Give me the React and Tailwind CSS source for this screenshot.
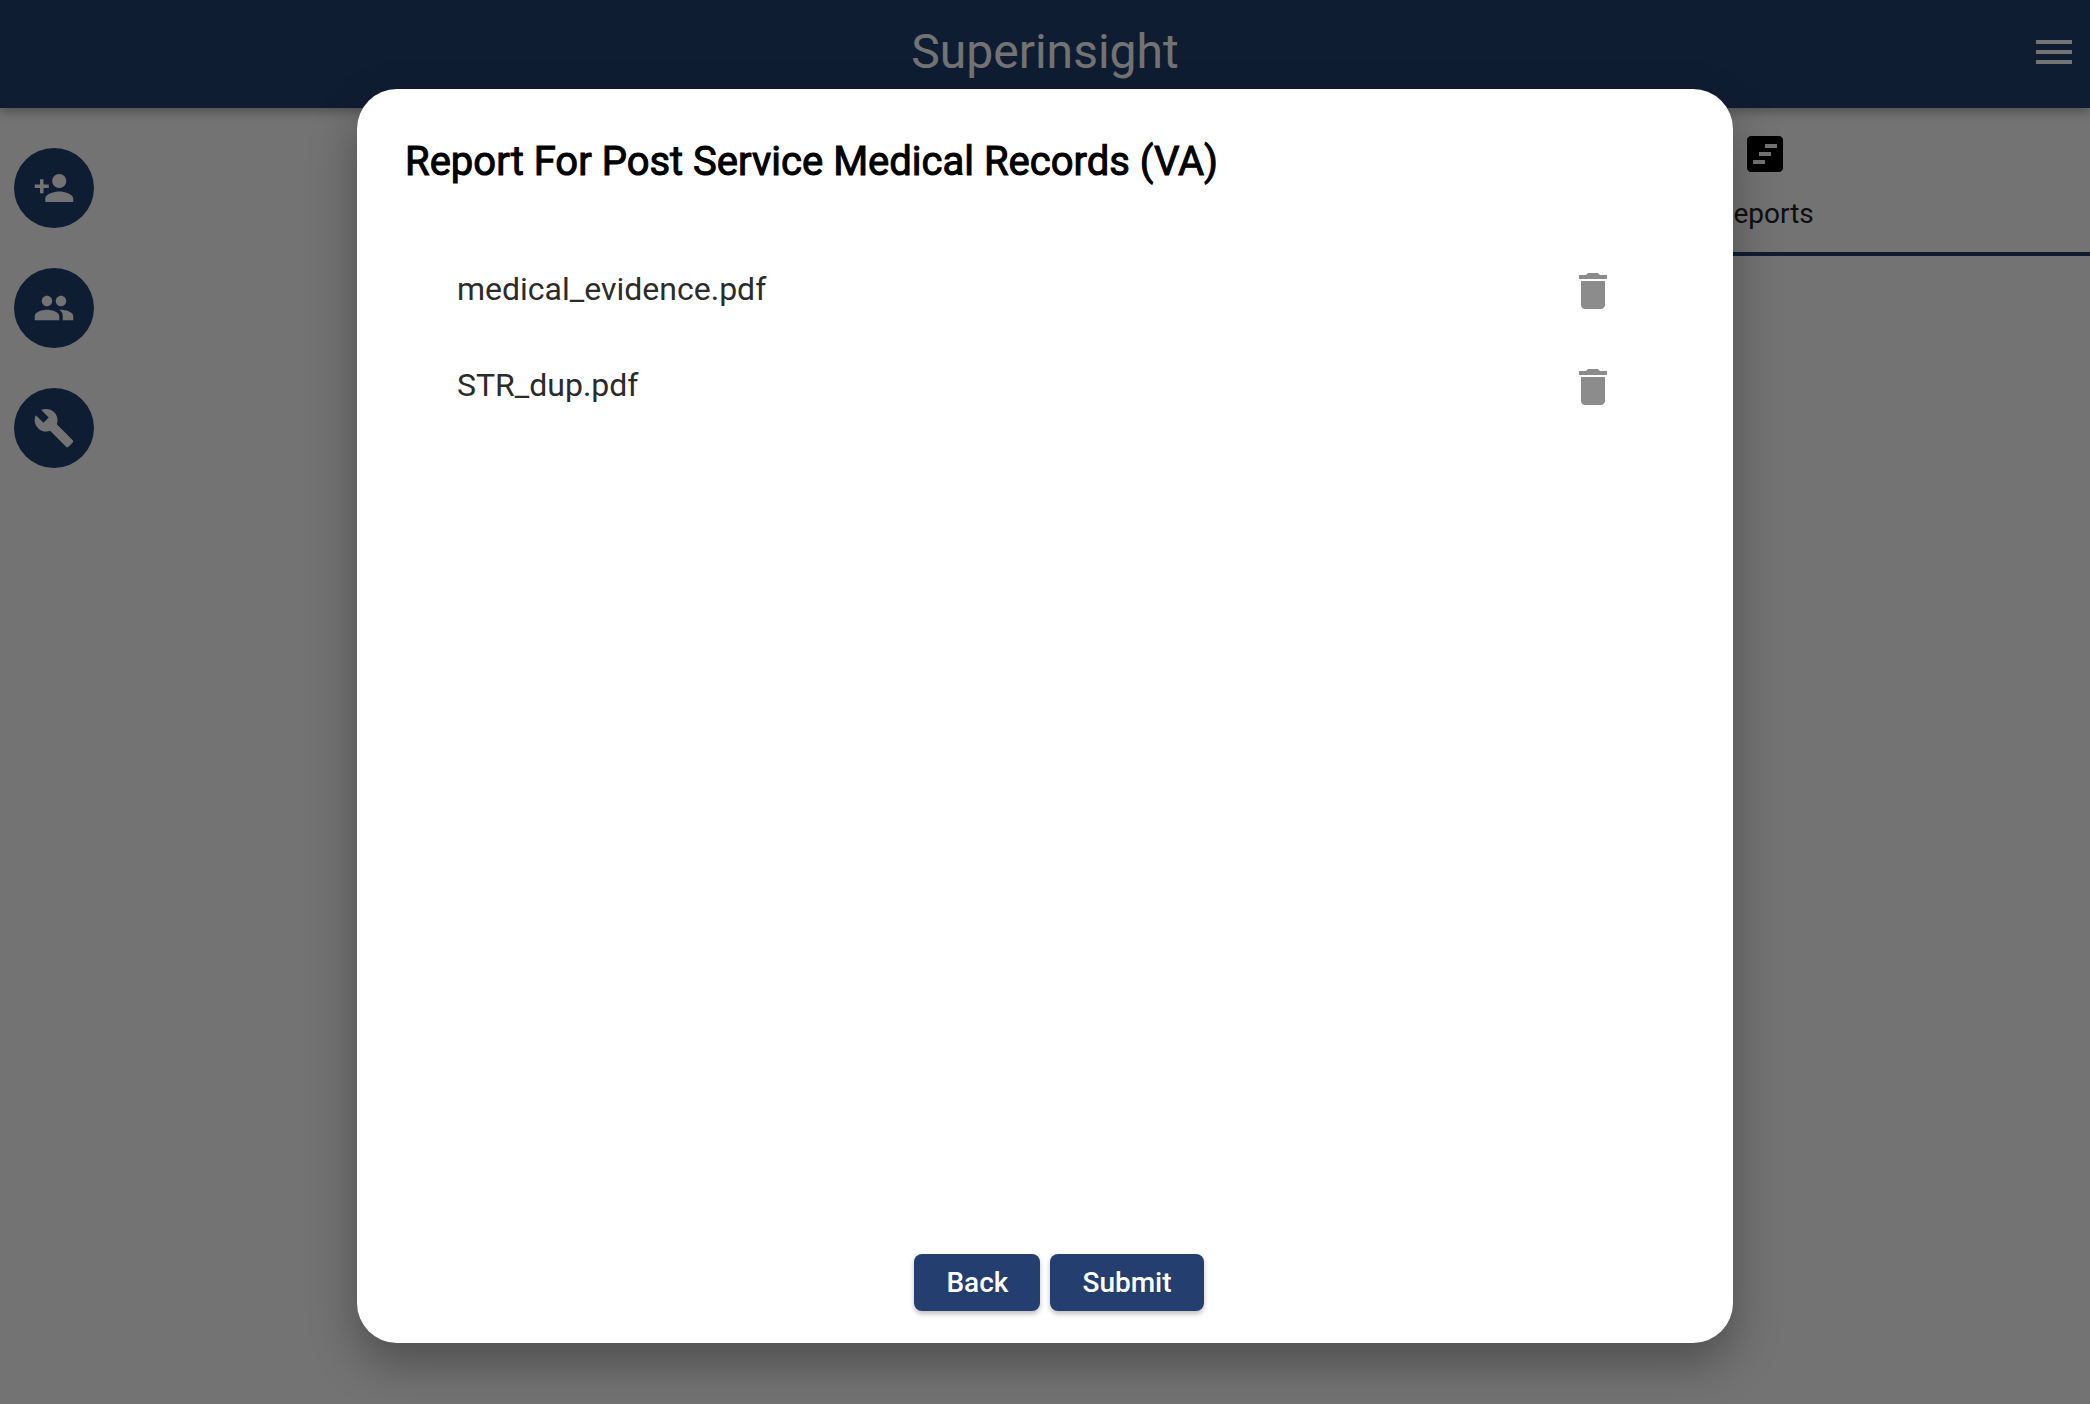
import React from "react";
import { MdPeople, MdBuild, MdMenu, MdDelete } from "react-icons/md";

const files = ["medical_evidence.pdf", "STR_dup.pdf"];

function PersonAddIcon() {
  return (
    <svg viewBox="0 0 24 24" fill="currentColor" className="size-[42px]" aria-hidden="true">
      <path d="M15 12c2.21 0 4-1.79 4-4s-1.79-4-4-4-4 1.79-4 4 1.79 4 4 4zm-9-2V7H4v3H1v2h3v3h2v-3h3v-2H6zm9 4c-2.67 0-8 1.34-8 4v2h16v-2c0-2.66-5.33-4-8-4z" />
    </svg>
  );
}

function ReportIcon() {
  return (
    <svg viewBox="0 0 24 24" fill="currentColor" className="size-12" aria-hidden="true">
      <path
        fillRule="evenodd"
        d="M19 3H5c-1.1 0-2 .9-2 2v14c0 1.1.9 2 2 2h14c1.1 0 2-.9 2-2V5c0-1.1-.9-2-2-2zM12 17H6v-2h6v2zm3-4H9v-2h6v2zm3-4h-6V7h6v2z"
      />
    </svg>
  );
}

function RailButton({ label, children }) {
  return (
    <button
      type="button"
      aria-label={label}
      className="flex size-20 items-center justify-center rounded-full bg-[#22406f] text-[#fafafa]"
    >
      {children}
    </button>
  );
}

function ActionButton({ children }) {
  return (
    <button
      type="button"
      className="h-[57px] rounded-lg bg-[#243e6f] px-8 text-[28px] font-medium text-white shadow-[0_3px_5px_rgba(0,0,0,0.25)]"
    >
      {children}
    </button>
  );
}

export default function App() {
  return (
    <div className="relative flex min-h-screen flex-col bg-[#fafafa] font-[Roboto,sans-serif]">
      <header className="relative z-10 grid h-[108px] grid-cols-[1fr_auto_1fr] items-center bg-[#22406f] px-3 pb-1 text-[#fafafa] shadow-[0_4px_10px_rgba(0,0,0,0.3)]">
        <h1 className="col-start-2 text-5xl">Superinsight</h1>
        <button type="button" aria-label="Menu" className="justify-self-end">
          <MdMenu className="size-12" />
        </button>
      </header>

      <div className="flex flex-1">
        <nav className="flex w-[140px] flex-col gap-10 pt-10 pl-[14px]">
          <RailButton label="Add person">
            <PersonAddIcon />
          </RailButton>
          <RailButton label="People">
            <MdPeople className="size-[42px]" />
          </RailButton>
          <RailButton label="Tools">
            <MdBuild className="size-[42px]" />
          </RailButton>
        </nav>
        <main className="flex-1">
          <div role="tablist" className="grid grid-cols-3">
            <button
              type="button"
              role="tab"
              aria-selected="true"
              className="col-start-3 flex h-[148px] flex-col items-center gap-4 border-b-4 border-[#22406f] pt-[22px] text-[28px] leading-10 text-[#212121]"
            >
              <span className="text-black">
                <ReportIcon />
              </span>
              Reports
            </button>
          </div>
        </main>
      </div>

      <div className="absolute inset-0 z-20 flex bg-black/54 px-[357px] pt-[89px] pb-[61px]">
        <section
          role="dialog"
          aria-modal="true"
          aria-labelledby="dialog-title"
          className="flex flex-1 flex-col rounded-[40px] bg-white px-12 pt-12 pb-8 shadow-[0_20px_48px_rgba(0,0,0,0.32)]"
        >
          <h2
            id="dialog-title"
            className="text-[40px] leading-[50px] text-black [-webkit-text-stroke:1px_black]"
          >
            Report For Post Service Medical Records (VA)
          </h2>
          <ul className="mt-14 flex-1 pr-[68px] pl-[52px]">
            {files.map((file) => (
              <li key={file} className="flex h-24 items-center justify-between">
                <span className="pb-1 text-[32px] text-[#2b2b2b]">{file}</span>
                <button type="button" aria-label={`Delete ${file}`} className="text-[#8c8c8c]">
                  <MdDelete className="size-12" />
                </button>
              </li>
            ))}
          </ul>
          <div className="flex justify-center gap-[10px] pl-7">
            <ActionButton>Back</ActionButton>
            <ActionButton>Submit</ActionButton>
          </div>
        </section>
      </div>
    </div>
  );
}
